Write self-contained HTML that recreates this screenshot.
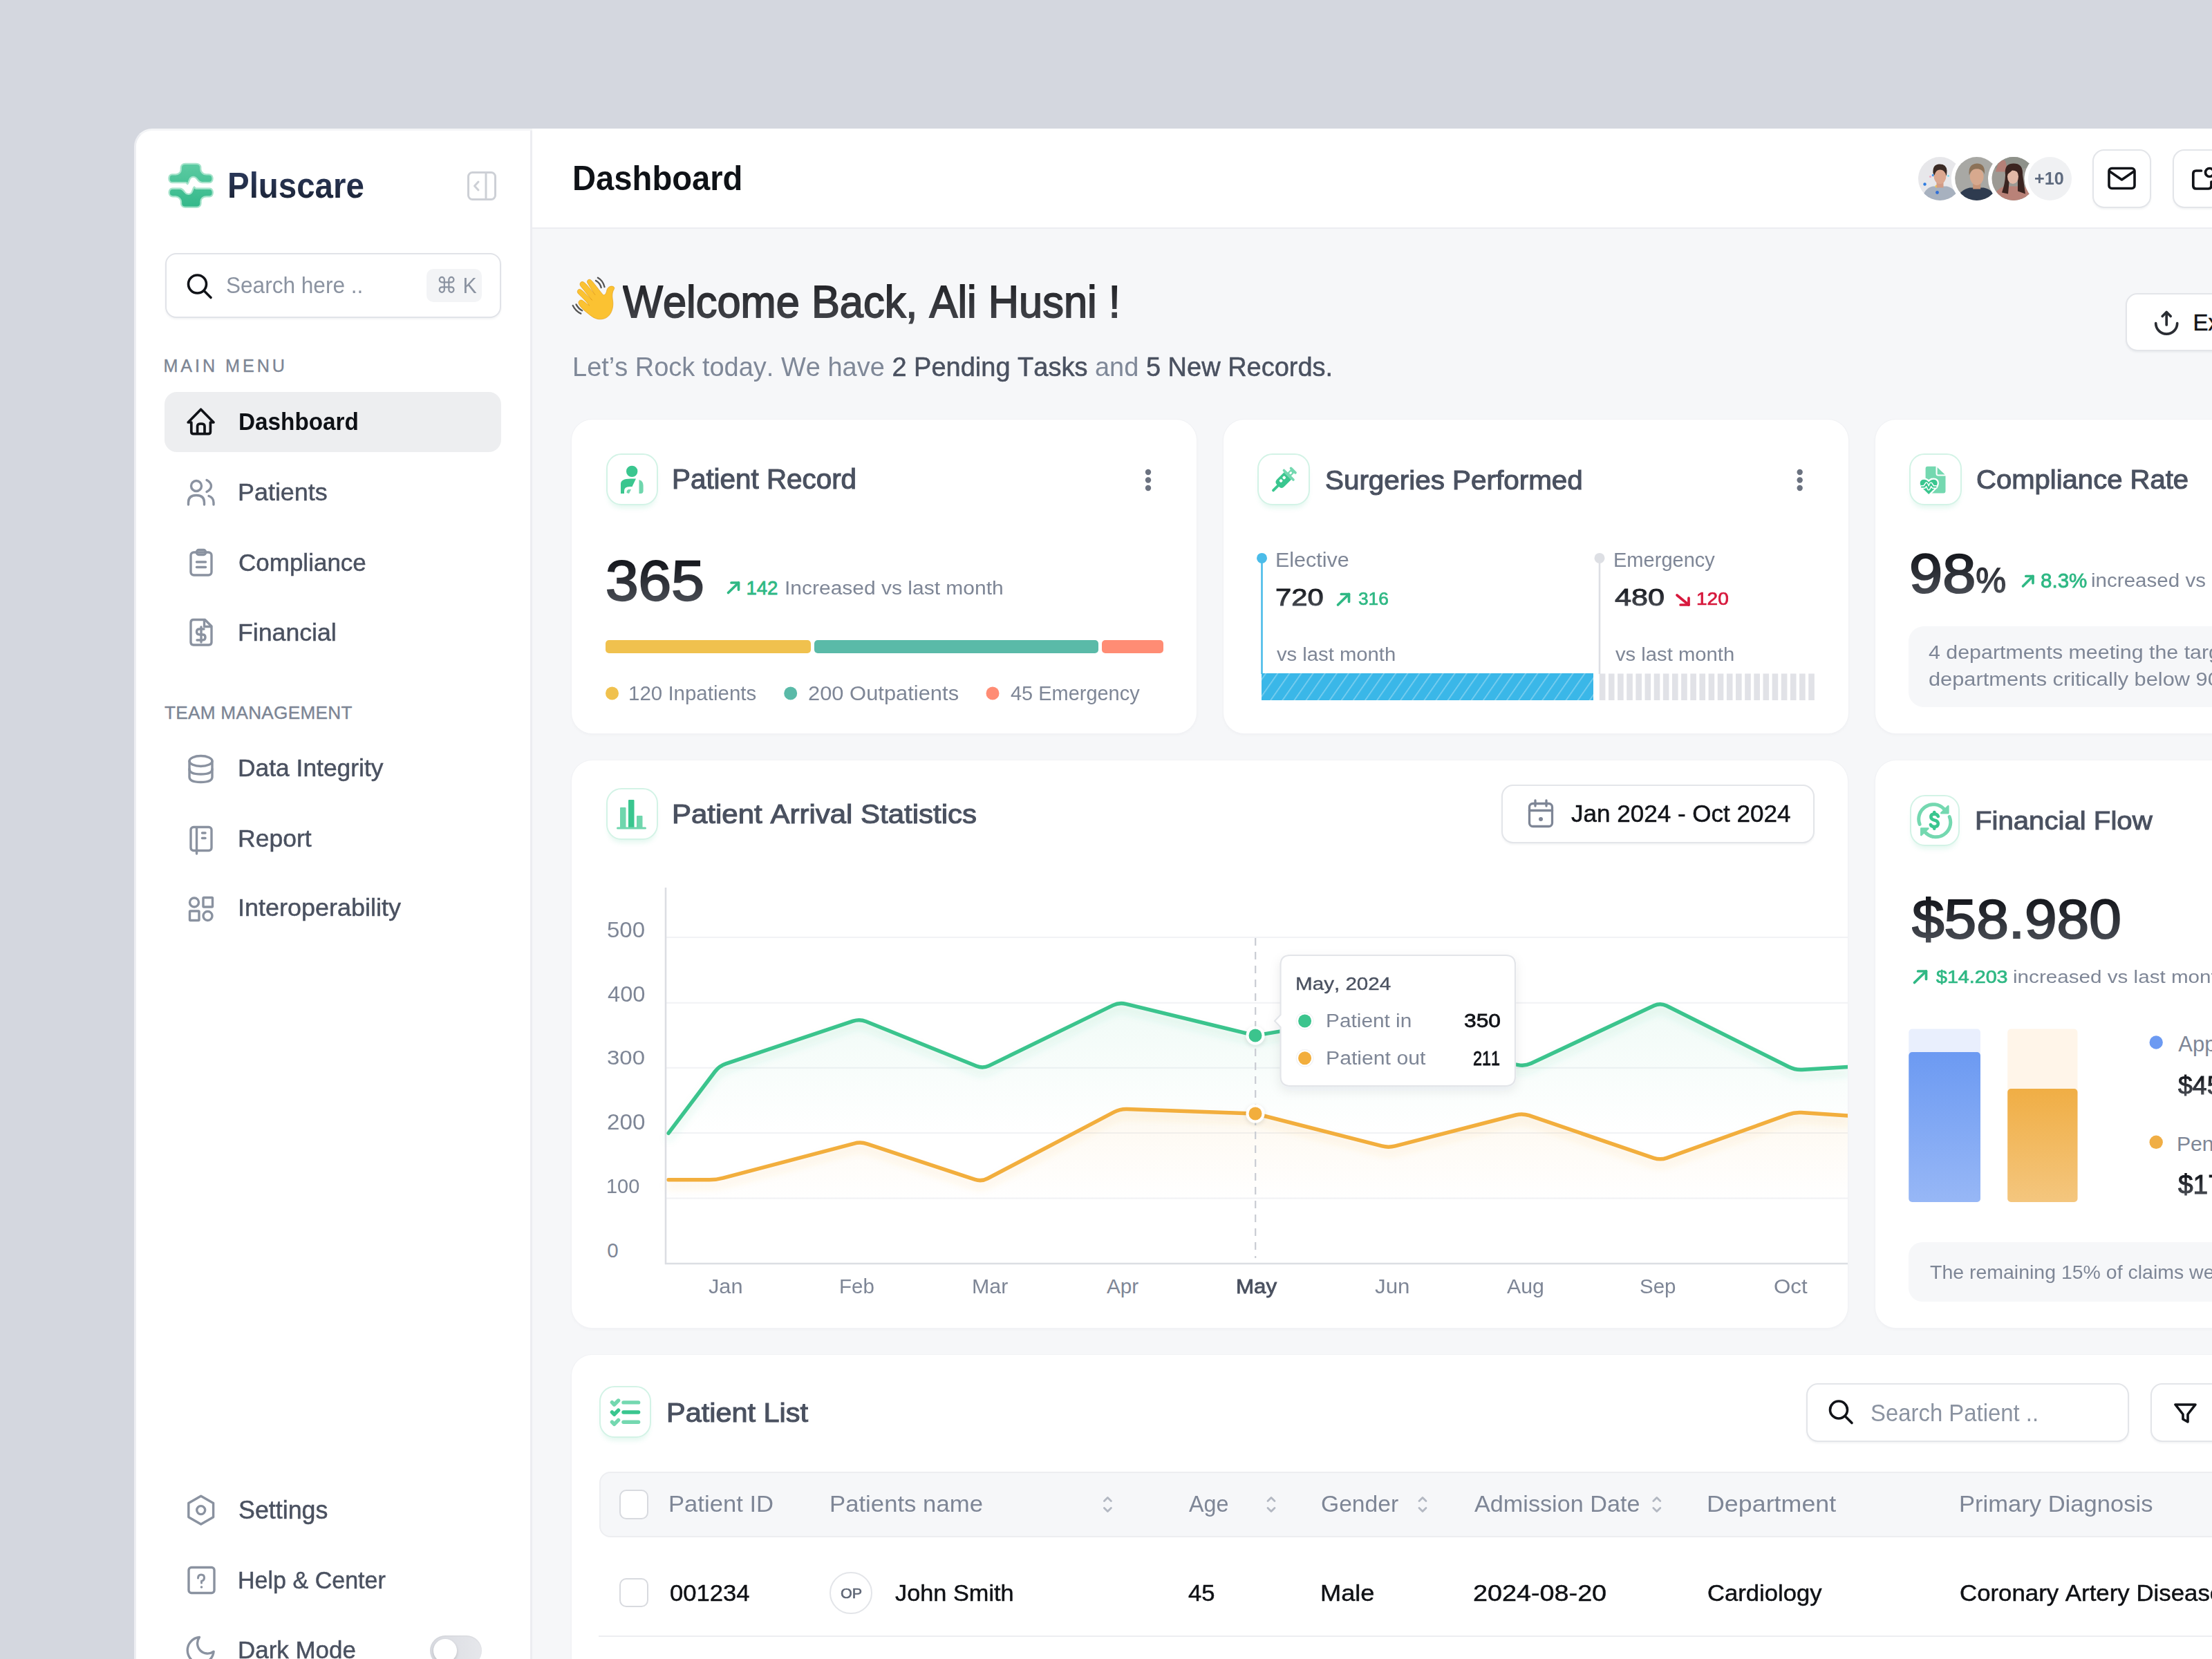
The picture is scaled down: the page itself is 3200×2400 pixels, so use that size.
<!DOCTYPE html>
<html><head><meta charset="utf-8"><title>Pluscare Dashboard</title>
<style>
html,body{margin:0;padding:0;}
body{width:3200px;height:2400px;overflow:hidden;position:relative;background:#D4D7DF;font-family:"Liberation Sans",sans-serif;font-kerning:none;}
.b{position:absolute;box-sizing:border-box;}
.t{position:absolute;white-space:nowrap;font-kerning:none;}
svg.ov{position:absolute;left:0;top:0;}
</style></head><body>
<div class="b" style="left:194.0px;top:186.0px;width:3100.0px;height:2300.0px;background:#F6F7F9;border:3px solid #EDEEF2;border-top-color:#F4F5F7;border-radius:26px;"></div>
<div class="b" style="left:197.0px;top:189.0px;width:570.0px;height:2300.0px;background:#FFFFFF;border-top-left-radius:23px;"></div>
<div class="b" style="left:769.5px;top:186.0px;width:2500.0px;height:3.0px;background:#FFFFFF;"></div>
<div class="b" style="left:767.0px;top:189.0px;width:2.5px;height:2300.0px;background:#ECEDF1;"></div>
<div class="b" style="left:769.5px;top:186.0px;width:2500.0px;height:143.0px;background:#FFFFFF;"></div>
<div class="b" style="left:769.5px;top:329.0px;width:2500.0px;height:2.2px;background:#ECEDF1;"></div>
<div class="b" style="left:238.5px;top:366.0px;width:486.0px;height:94.0px;background:#fff;border:2.5px solid #E1E3E8;border-radius:16px;box-shadow:0 2px 3px rgba(20,30,50,0.05);"></div>
<div class="b" style="left:617.0px;top:389.0px;width:80.0px;height:48.0px;background:#F3F4F6;border-radius:10px;"></div>
<div class="b" style="left:238.0px;top:567.0px;width:487.0px;height:87.0px;background:#EDEEF0;border-radius:18px;"></div>
<div class="b" style="left:622.2px;top:2366.2px;width:75.0px;height:44.0px;background:linear-gradient(90deg,#D9DBE1,#E6E7EB);border-radius:22px;box-shadow:inset 0 1px 2px rgba(0,0,0,0.06);"></div>
<div class="b" style="left:626.7px;top:2371.0px;width:34.0px;height:34.0px;background:#fff;border-radius:50%;box-shadow:0 2px 4px rgba(0,0,0,0.15);"></div>
<div class="b" style="left:3027.0px;top:216.0px;width:85.0px;height:85.0px;background:#fff;border:2.5px solid #E3E5E9;border-radius:17px;box-shadow:0 2px 3px rgba(20,30,50,0.05);"></div>
<div class="b" style="left:3143.0px;top:216.0px;width:120.0px;height:85.0px;background:#fff;border:2.5px solid #E3E5E9;border-radius:17px;box-shadow:0 2px 3px rgba(20,30,50,0.05);"></div>
<div class="b" style="left:3075.0px;top:424.0px;width:200.0px;height:84.0px;background:#fff;border:2.5px solid #E3E5E9;border-radius:17px;box-shadow:0 2px 3px rgba(20,30,50,0.05);"></div>
<div class="b" style="left:827.0px;top:607.0px;width:904.0px;height:454.0px;background:#fff;border-radius:30px;box-shadow:0 0 0 1px #F1F2F5, 0 2px 5px rgba(20,30,50,0.035);"></div>
<div class="b" style="left:1770.0px;top:607.0px;width:904.0px;height:454.0px;background:#fff;border-radius:30px;box-shadow:0 0 0 1px #F1F2F5, 0 2px 5px rgba(20,30,50,0.035);"></div>
<div class="b" style="left:2713.0px;top:607.0px;width:700.0px;height:454.0px;background:#fff;border-radius:30px;box-shadow:0 0 0 1px #F1F2F5, 0 2px 5px rgba(20,30,50,0.035);"></div>
<div class="b" style="left:876.5px;top:656.0px;width:75.5px;height:75.0px;background:#fff;border:2.3px solid #D3F3E6;border-radius:22px;box-shadow:0 7px 7px -3px rgba(60,196,142,0.14);"></div>
<div class="b" style="left:876.0px;top:925.5px;width:297.0px;height:19.0px;background:#F0C14E;border-radius:5px;"></div>
<div class="b" style="left:1178.0px;top:925.5px;width:411.0px;height:19.0px;background:#5ABAA8;border-radius:5px;"></div>
<div class="b" style="left:1594.0px;top:925.5px;width:89.0px;height:19.0px;background:#FF8C74;border-radius:5px;"></div>
<div class="b" style="left:1819.4px;top:656.0px;width:75.5px;height:75.0px;background:#fff;border:2.3px solid #D3F3E6;border-radius:22px;box-shadow:0 7px 7px -3px rgba(60,196,142,0.14);"></div>
<div class="b" style="left:2762.3px;top:656.0px;width:75.5px;height:75.0px;background:#fff;border:2.3px solid #D3F3E6;border-radius:22px;box-shadow:0 7px 7px -3px rgba(60,196,142,0.14);"></div>
<div class="b" style="left:2761.0px;top:906.0px;width:600.0px;height:116.6px;background:#F6F7F9;border-radius:22px;"></div>
<div class="b" style="left:827.0px;top:1100.2px;width:1846.0px;height:821.3px;background:#fff;border-radius:30px;box-shadow:0 0 0 1px #F1F2F5, 0 2px 5px rgba(20,30,50,0.035);"></div>
<div class="b" style="left:876.5px;top:1139.5px;width:75.5px;height:75.0px;background:#fff;border:2.3px solid #D3F3E6;border-radius:22px;box-shadow:0 7px 7px -3px rgba(60,196,142,0.14);"></div>
<div class="b" style="left:2172.0px;top:1135.2px;width:453.3px;height:85.2px;background:#fff;border:2.5px solid #E3E5E9;border-radius:17px;box-shadow:0 2px 3px rgba(20,30,50,0.05);"></div>
<div class="b" style="left:2713.0px;top:1100.2px;width:700.0px;height:821.3px;background:#fff;border-radius:30px;box-shadow:0 0 0 1px #F1F2F5, 0 2px 5px rgba(20,30,50,0.035);"></div>
<div class="b" style="left:2762.8px;top:1149.5px;width:72.5px;height:74.6px;background:#fff;border:2.3px solid #D3F3E6;border-radius:22px;box-shadow:0 7px 7px -3px rgba(60,196,142,0.14);"></div>
<div class="b" style="left:2761.2px;top:1796.7px;width:600.0px;height:86.3px;background:#F6F7F9;border-radius:20px;"></div>
<div class="b" style="left:827.0px;top:1960.0px;width:2500.0px;height:600.0px;background:#fff;border-radius:30px;box-shadow:0 0 0 1px #F1F2F5, 0 2px 5px rgba(20,30,50,0.035);"></div>
<div class="b" style="left:866.9px;top:2004.6px;width:75.5px;height:75.5px;background:#fff;border:2.3px solid #D3F3E6;border-radius:22px;box-shadow:0 7px 7px -3px rgba(60,196,142,0.14);"></div>
<div class="b" style="left:2613.3px;top:2000.8px;width:466.4px;height:84.8px;background:#fff;border:2.5px solid #E3E5E9;border-radius:17px;box-shadow:0 2px 3px rgba(20,30,50,0.05);"></div>
<div class="b" style="left:3111.4px;top:2000.8px;width:120.0px;height:84.8px;background:#fff;border:2.5px solid #E3E5E9;border-radius:17px;box-shadow:0 2px 3px rgba(20,30,50,0.05);"></div>
<div class="b" style="left:866.5px;top:2128.5px;width:2400.0px;height:95.5px;background:#F6F7F9;border:2px solid #EDEEF1;border-radius:16px;"></div>
<div class="b" style="left:895.8px;top:2154.7px;width:42.1px;height:43.0px;background:#fff;border:2.5px solid #D8DADF;border-radius:10px;"></div>
<div class="b" style="left:895.8px;top:2282.7px;width:42.1px;height:42.5px;background:#fff;border:2.5px solid #D8DADF;border-radius:10px;"></div>
<div class="b" style="left:1200.0px;top:2273.6px;width:61.5px;height:61.5px;background:#fff;border:2.5px solid #E3E5E9;border-radius:50%;"></div>
<div class="b" style="left:866.0px;top:2366.0px;width:2400.0px;height:2.2px;background:#EDEEF1;"></div>
<svg class="ov" width="3200" height="2400" viewBox="0 0 3200 2400">
<defs>
<linearGradient id="lg" gradientUnits="userSpaceOnUse" x1="0" y1="220" x2="0" y2="1390"><stop offset="0" stop-color="#5CCBA2"/><stop offset="1" stop-color="#33B88A"/></linearGradient>
<linearGradient id="gfill" x1="0" y1="0" x2="0" y2="1"><stop offset="0" stop-color="#3CC48E" stop-opacity="0.075"/><stop offset="0.5" stop-color="#3CC48E" stop-opacity="0.0"/></linearGradient>
<linearGradient id="ofill" x1="0" y1="0" x2="0" y2="1"><stop offset="0" stop-color="#F2AE3D" stop-opacity="0.075"/><stop offset="0.6" stop-color="#F2AE3D" stop-opacity="0.0"/></linearGradient>
<linearGradient id="bluebar" x1="0" y1="0" x2="0" y2="1"><stop offset="0" stop-color="#6C9AF2"/><stop offset="1" stop-color="#97B7F6"/></linearGradient>
<linearGradient id="orabar" x1="0" y1="0" x2="0" y2="1"><stop offset="0" stop-color="#F0AE45"/><stop offset="1" stop-color="#F4C67E"/></linearGradient>
<linearGradient id="numgrad" x1="0" y1="0" x2="0" y2="1"><stop offset="0" stop-color="#0B0D12"/><stop offset="1" stop-color="#4E525B"/></linearGradient>
<pattern id="hatch" width="14" height="14" patternUnits="userSpaceOnUse" patternTransform="rotate(35)"><rect width="14" height="14" fill="#3AB7E8"/><rect width="1.6" height="14" fill="#7FD0F0"/></pattern>
<filter id="sh" x="-20%" y="-20%" width="140%" height="160%"><feDropShadow dx="0" dy="6" stdDeviation="8" flood-color="#1F2937" flood-opacity="0.08"/></filter>
<filter id="dsh" x="-60%" y="-60%" width="220%" height="220%"><feDropShadow dx="0" dy="2" stdDeviation="3" flood-color="#1F2937" flood-opacity="0.12"/></filter>
<filter id="lsh" x="-5%" y="-30%" width="110%" height="160%"><feDropShadow dx="0" dy="8" stdDeviation="6" flood-color="#3CC48E" flood-opacity="0.18"/></filter>
<filter id="losh" x="-5%" y="-30%" width="110%" height="160%"><feDropShadow dx="0" dy="8" stdDeviation="6" flood-color="#F2AE3D" flood-opacity="0.18"/></filter>
</defs>
<svg x="230" y="225" width="100" height="90" viewBox="0 0 1843 1659">
<g fill="url(#lg)" stroke="#A6E3CB" stroke-width="42" stroke-linejoin="round">
<path d="M350,720 L720,720 L760,760 C800,720 800,640 840,600 C880,560 960,550 1010,620 C1050,680 1080,720 1150,720 L1340,720 C1400,720 1430,670 1430,612 C1430,550 1390,505 1330,505 L1260,505 C1180,505 1110,440 1110,360 L1110,320 C1110,260 1060,220 990,220 L700,220 C630,220 585,265 585,330 L585,380 C585,450 520,505 440,505 L350,505 C300,505 265,550 265,612 C265,670 300,720 350,720 Z"/>
<path d="M1350,880 L980,880 L940,840 C900,880 900,960 860,1000 C820,1040 740,1050 690,980 C650,920 620,880 550,880 L360,880 C300,880 270,930 270,988 C270,1050 310,1095 370,1095 L440,1095 C520,1095 590,1160 590,1240 L590,1280 C590,1340 640,1380 710,1380 L1000,1380 C1070,1380 1115,1335 1115,1270 L1115,1220 C1115,1150 1180,1095 1260,1095 L1350,1095 C1400,1095 1435,1050 1435,988 C1435,930 1400,880 1350,880 Z"/>
</g></svg>
<rect x="677.5" y="249.5" width="39" height="39" rx="6" fill="none" stroke="#CDD0D6" stroke-width="3"/>
<line x1="703" y1="249.5" x2="703" y2="288.5" stroke="#CDD0D6" stroke-width="3"/>
<polyline points="692,263 686.5,269 692,275" fill="none" stroke="#CDD0D6" stroke-width="3" stroke-linecap="round" stroke-linejoin="round"/>
<circle cx="285.5" cy="411" r="13" fill="none" stroke="#111318" stroke-width="3.6"/>
<line x1="295" y1="420.5" x2="305" y2="430.5" stroke="#111318" stroke-width="3.6" stroke-linecap="round"/>
<path d="M276.8,611 L272.2,611 L290.6,592.2 L309,611 L304.4,611 L304.4,624.5 Q304.4,627.6 301.3,627.6 L279.9,627.6 Q276.8,627.6 276.8,624.5 Z" fill="none" stroke="#111318" stroke-width="3.7" stroke-linejoin="round"/>
<path d="M285.6,627.6 L285.6,616.5 Q285.6,613 290.8,613 Q296,613 296,616.5 L296,627.6" fill="none" stroke="#111318" stroke-width="3.7" stroke-linejoin="round"/>
<g fill="none" stroke="#8A92A0" stroke-width="3.4" stroke-linecap="round" stroke-linejoin="round"><circle cx="284" cy="703" r="7.5"/><path d="M272.5,730 L272.5,727 Q272.5,716.5 284,716.5 Q295.5,716.5 295.5,727 L295.5,730"/>
<path d="M299,694.5 Q305.5,698 305.5,703 Q305.5,708 299,711.5"/><path d="M302,717.5 Q309,720 309,727 L309,730"/></g>
<g fill="none" stroke="#8A92A0" stroke-width="3.4" stroke-linecap="round" stroke-linejoin="round"><rect x="276" y="799" width="30" height="33" rx="4.5"/><rect x="284.5" y="795.5" width="13" height="7" rx="3"/>
<line x1="284.5" y1="813" x2="297.5" y2="813"/><line x1="284.5" y1="820.5" x2="297.5" y2="820.5"/></g>
<g fill="none" stroke="#8A92A0" stroke-width="3.4" stroke-linecap="round" stroke-linejoin="round"><path d="M280,896.5 L296.5,896.5 L306,906 L306,929 Q306,933 302,933 L280,933 Q276,933 276,929 L276,900.5 Q276,896.5 280,896.5 Z"/>
<path d="M295.5,897 L295.5,906.5 L305.5,906.5"/>
<path d="M295,910 L288.5,910 Q284.5,910 284.5,914 Q284.5,918 288.5,918 L293,918 Q297,918 297,922 Q297,926 293,926 L285,926"/><line x1="291" y1="907" x2="291" y2="929"/></g>
<g fill="none" stroke="#8A92A0" stroke-width="3.4" stroke-linecap="round" stroke-linejoin="round"><ellipse cx="290.5" cy="1101" rx="16.5" ry="7.5"/><path d="M274,1101 L274,1124 Q274,1131.5 290.5,1131.5 Q307,1131.5 307,1124 L307,1101"/>
<path d="M274,1112.5 Q274,1120 290.5,1120 Q307,1120 307,1112.5"/></g>
<g fill="none" stroke="#8A92A0" stroke-width="3.4" stroke-linecap="round" stroke-linejoin="round"><rect x="276" y="1196.5" width="30" height="34" rx="4"/><line x1="284.5" y1="1197" x2="284.5" y2="1235"/>
<line x1="292.5" y1="1205" x2="297" y2="1205"/><line x1="292.5" y1="1212.5" x2="297" y2="1212.5"/></g>
<g fill="none" stroke="#8A92A0" stroke-width="3.4" stroke-linecap="round" stroke-linejoin="round"><circle cx="281" cy="1305.5" r="6.5"/><rect x="294" y="1298.5" width="13.5" height="13.5" rx="1"/>
<rect x="274.5" y="1318" width="13.5" height="13.5" rx="1"/><circle cx="300.5" cy="1325" r="6.5"/></g>
<g fill="none" stroke="#8A92A0" stroke-width="3.4" stroke-linecap="round" stroke-linejoin="round"><path d="M290.7,2164.3 L308.6,2174.5 L308.6,2194.8 L290.7,2205 L272.8,2194.8 L272.8,2174.5 Z"/><circle cx="290.7" cy="2184.6" r="6"/></g>
<g fill="none" stroke="#8A92A0" stroke-width="3.4" stroke-linecap="round" stroke-linejoin="round"><rect x="273" y="2267.5" width="37" height="37" rx="4"/></g>
<path d="M286.5,2283 Q286.5,2278 291,2278 Q295.5,2278 295.5,2282.5 Q295.5,2286 291.5,2287.5 L291.5,2290" fill="none" stroke="#8A92A0" stroke-width="3" stroke-linecap="round"/>
<circle cx="291.5" cy="2296" r="1.8" fill="#8A92A0"/>
<g transform="translate(264.8,2362.2) scale(2.11)"><path d="M21 12.79A9 9 0 1 1 11.21 3 7 7 0 0 0 21 12.79z" fill="none" stroke="#8A92A0" stroke-width="1.6" stroke-linejoin="round"/></g>
<circle cx="2806.5" cy="258.5" r="37.0" fill="#fff"/>
<clipPath id="av2806"><circle cx="2806.5" cy="258.5" r="31.5"/></clipPath><g clip-path="url(#av2806)"><rect x="2771.5" y="223.5" width="70" height="70" fill="#E7E7EA"/><g transform="translate(2806.5,258.5)">
<circle cx="-22" cy="8" r="2.2" fill="#2F7DE1"/><circle cx="-14" cy="-3" r="1.6" fill="#F0A7C0"/><circle cx="-10" cy="-5" r="1.8" fill="#3E90E8"/><circle cx="12" cy="-4" r="1.4" fill="#7FD3E8"/>
<path d="M-26,32 Q-24,14 -10,11 L10,11 Q24,14 26,32 Z" fill="#A7B1BF"/>
<circle cx="-4" cy="20" r="2.4" fill="#2F6FD8"/><circle cx="-5" cy="11" r="2" fill="#F2C94C"/>
<rect x="-5" y="4" width="10" height="9" fill="#D29C86"/>
<ellipse cx="0" cy="-4" rx="9" ry="11.5" fill="#DCA890"/>
<path d="M-10,-8 Q-11,-20 -2,-21 Q9,-22 10,-12 Q10,-6 9,-4 Q7,-13 0,-13 Q-6,-13 -8,-5 Z" fill="#3A2A24"/></g></g>
<circle cx="2859.7" cy="258.5" r="37.0" fill="#fff"/>
<clipPath id="av2859"><circle cx="2859.7" cy="258.5" r="31.5"/></clipPath><g clip-path="url(#av2859)"><rect x="2824.7" y="223.5" width="70" height="70" fill="#A8A8A4"/><g transform="translate(2859.7,258.5)">
<path d="M-30,34 Q-26,16 -10,13 L10,13 Q26,16 30,34 Z" fill="#2E3B4F"/>
<rect x="-5.5" y="5" width="11" height="10" fill="#C89578"/>
<ellipse cx="0" cy="-3" rx="10" ry="12.5" fill="#D7A98E"/>
<path d="M-11,-5 Q-13,-21 0,-22 Q13,-22 11,-6 Q10,-12 3,-14 Q-6,-15 -9,-9 Z" fill="#8C7258"/></g></g>
<circle cx="2913.0" cy="258.5" r="37.0" fill="#fff"/>
<clipPath id="av2913"><circle cx="2913.0" cy="258.5" r="31.5"/></clipPath><g clip-path="url(#av2913)"><rect x="2878.0" y="223.5" width="70" height="70" fill="#9C9A94"/><g transform="translate(2913.0,258.5)">
<rect x="-35" y="-35" width="70" height="20" fill="#8E918A"/>
<path d="M-30,34 Q-28,14 -12,11 L12,11 Q28,14 30,34 Z" fill="#B98278"/>
<path d="M-26,-10 Q-22,-30 -12,-26 L-8,-10 Z" fill="#B58077"/>
<path d="M-12,-6 Q-14,-22 0,-22 Q14,-22 13,-6 Q15,8 17,22 L6,18 L6,0 L-6,0 L-8,22 L-17,20 Q-12,6 -12,-6 Z" fill="#3B2420"/>
<ellipse cx="-1" cy="-3" rx="8" ry="10.5" fill="#E2B8A6"/>
<path d="M-9,-6 Q-8,-17 2,-17 Q11,-16 10,-4 Q6,-12 -2,-12 Z" fill="#3B2420"/></g></g>
<circle cx="2965.5" cy="258.5" r="37" fill="#fff"/><circle cx="2965.5" cy="258.5" r="31.5" fill="#F0F1F3"/>
<rect x="3051" y="243.5" width="37" height="29" rx="4" fill="none" stroke="#111318" stroke-width="3.6"/>
<polyline points="3052,248 3069.5,260 3087,248" fill="none" stroke="#111318" stroke-width="3.6" stroke-linejoin="round" stroke-linecap="round"/>
<path d="M3184.5,247 L3177,247 Q3172.8,247 3172.8,251.2 L3172.8,268.8 Q3172.8,273 3177,273 L3194.8,273 Q3199,273 3199,268.8 L3199,263" fill="none" stroke="#111318" stroke-width="3.7" stroke-linecap="round"/>
<circle cx="3196.5" cy="249.5" r="6" fill="none" stroke="#111318" stroke-width="3.7"/>
<svg x="820" y="390" width="80" height="80" viewBox="0 0 1659 1659">
<g fill="none" stroke="#555" stroke-width="48" stroke-linecap="round">
<path d="M870,330 C960,380 1010,450 1030,540"/><path d="M930,245 C1030,300 1100,390 1130,520"/>
<path d="M180,1080 C230,1180 310,1270 420,1320"/><path d="M280,1045 C320,1120 380,1190 460,1230"/>
</g>
<path fill="#FBC232" stroke="#E39B12" stroke-width="14" d="M1000,1490 C860,1490 760,1420 640,1320 C520,1230 400,1120 360,1030 C330,960 390,890 460,920 C520,950 600,1040 680,1080 C600,980 460,830 350,730 C290,670 320,580 390,590 C450,600 560,720 760,920 C650,790 500,600 410,490 C370,430 410,350 480,365 C540,380 640,500 850,760 C770,640 660,470 620,400 C590,340 640,280 700,300 C760,320 880,510 1090,760 C1150,770 1180,720 1200,620 C1220,540 1290,490 1360,500 C1430,510 1440,560 1410,600 C1350,700 1360,820 1380,940 C1410,1160 1320,1490 1000,1490 Z"/>
</svg>
<path d="M3118.7,467.7 A15.5,15.5 0 0 0 3149.7,467.7" fill="none" stroke="#2A2D33" stroke-width="3.7" stroke-linecap="round"/>
<line x1="3134.2" y1="452" x2="3134.2" y2="470" stroke="#2A2D33" stroke-width="3.7" stroke-linecap="round"/>
<polyline points="3128.2,457.5 3134.2,451.5 3140.2,457.5" fill="none" stroke="#2A2D33" stroke-width="3.7" stroke-linecap="round" stroke-linejoin="round"/>
<circle cx="914.2" cy="681.9" r="8.2" fill="#3AC68F"/>
<path d="M898,714 L898,700 Q898,692.4 912,692.4 L920,692.4 L914.5,704 L911,704 Q903,704 903,710 L903,714 Z" fill="#3AC68F"/>
<path d="M906.5,713 Q906.5,708.5 909.5,708 L913,708 L910,714 Z" fill="#6FD6AD"/>
<path d="M924.5,694 Q930.6,696 930.6,702 L930.6,710 Q930.6,714 927,714 L924.5,714 Z" fill="#6FD6AD"/>
<g fill="#6B7280"><circle cx="1661.0" cy="683.0" r="4.2"/><circle cx="1661.0" cy="694.5" r="4.2"/><circle cx="1661.0" cy="706.0" r="4.2"/></g>
<g fill="none" stroke="#2FB884" stroke-width="3.7" stroke-linecap="round" stroke-linejoin="round"><line x1="1053.5" y1="857.5" x2="1068.5" y2="843.0"/><polyline points="1058.0,843.0 1068.5,843.0 1068.5,853.1"/></g>
<circle cx="885.5" cy="1003" r="9.5" fill="#F0C14E"/><circle cx="1143.7" cy="1003" r="9.5" fill="#5ABAA8"/><circle cx="1436" cy="1003" r="9.5" fill="#FF8C74"/>
<g transform="translate(1858.2,693.2) rotate(45)">
<rect x="-1.9" y="11" width="3.8" height="13.8" rx="1.9" fill="#3AC68F"/>
<path d="M-7.4,-6.6 L7.4,-6.6 L7.4,8 Q7.4,13.4 2,13.4 L-2,13.4 Q-7.4,13.4 -7.4,8 Z" fill="#3AC68F"/>
<rect x="-7.4" y="-8.6" width="14.8" height="2.4" fill="#74D8B0"/>
<rect x="-11.4" y="-10.3" width="22.8" height="3.6" rx="1.8" fill="#74D8B0"/>
<rect x="-3.6" y="-17.5" width="7.2" height="8" fill="#74D8B0"/>
<rect x="-6.4" y="-19.6" width="12.8" height="3.6" rx="1.8" fill="#74D8B0"/>
<rect x="-1.4" y="-14.6" width="2.8" height="3.8" rx="1" fill="#fff"/>
<rect x="-4" y="3.2" width="4.2" height="4.2" rx="1.4" fill="#fff"/><rect x="-4" y="-3.3" width="4.2" height="4.2" rx="1.4" fill="#fff"/>
</g>
<g fill="#6B7280"><circle cx="2603.7" cy="683.0" r="4.2"/><circle cx="2603.7" cy="694.5" r="4.2"/><circle cx="2603.7" cy="706.0" r="4.2"/></g>
<circle cx="1825.5" cy="807.4" r="7.5" fill="#4BBCE9"/><line x1="1825.5" y1="807" x2="1825.5" y2="975" stroke="#4BBCE9" stroke-width="2.6"/>
<circle cx="2314" cy="807.4" r="7.5" fill="#DDDFE4"/><line x1="2314" y1="807" x2="2314" y2="975" stroke="#DDDFE4" stroke-width="2.6"/>
<g fill="none" stroke="#2FB884" stroke-width="3.7" stroke-linecap="round" stroke-linejoin="round"><line x1="1935.5" y1="875.0" x2="1951.5" y2="859.5"/><polyline points="1940.3,859.5 1951.5,859.5 1951.5,870.4"/></g>
<g fill="none" stroke="#D7193D" stroke-width="3.7" stroke-linecap="round" stroke-linejoin="round"><line x1="2426.0" y1="861.0" x2="2443.0" y2="875.0"/><polyline points="2443.0,865.2 2443.0,875.0 2431.1,875.0"/></g>
<rect x="1825" y="974" width="480" height="39" fill="url(#hatch)"/>
<rect x="2313.80" y="974.5" width="8.6" height="38.5" fill="#E1E2E7"/><rect x="2326.95" y="974.5" width="8.6" height="38.5" fill="#E1E2E7"/><rect x="2340.10" y="974.5" width="8.6" height="38.5" fill="#E1E2E7"/><rect x="2353.25" y="974.5" width="8.6" height="38.5" fill="#E1E2E7"/><rect x="2366.40" y="974.5" width="8.6" height="38.5" fill="#E1E2E7"/><rect x="2379.55" y="974.5" width="8.6" height="38.5" fill="#E1E2E7"/><rect x="2392.70" y="974.5" width="8.6" height="38.5" fill="#E1E2E7"/><rect x="2405.85" y="974.5" width="8.6" height="38.5" fill="#E1E2E7"/><rect x="2419.00" y="974.5" width="8.6" height="38.5" fill="#E1E2E7"/><rect x="2432.15" y="974.5" width="8.6" height="38.5" fill="#E1E2E7"/><rect x="2445.30" y="974.5" width="8.6" height="38.5" fill="#E1E2E7"/><rect x="2458.45" y="974.5" width="8.6" height="38.5" fill="#E1E2E7"/><rect x="2471.60" y="974.5" width="8.6" height="38.5" fill="#E1E2E7"/><rect x="2484.75" y="974.5" width="8.6" height="38.5" fill="#E1E2E7"/><rect x="2497.90" y="974.5" width="8.6" height="38.5" fill="#E1E2E7"/><rect x="2511.05" y="974.5" width="8.6" height="38.5" fill="#E1E2E7"/><rect x="2524.20" y="974.5" width="8.6" height="38.5" fill="#E1E2E7"/><rect x="2537.35" y="974.5" width="8.6" height="38.5" fill="#E1E2E7"/><rect x="2550.50" y="974.5" width="8.6" height="38.5" fill="#E1E2E7"/><rect x="2563.65" y="974.5" width="8.6" height="38.5" fill="#E1E2E7"/><rect x="2576.80" y="974.5" width="8.6" height="38.5" fill="#E1E2E7"/><rect x="2589.95" y="974.5" width="8.6" height="38.5" fill="#E1E2E7"/><rect x="2603.10" y="974.5" width="8.6" height="38.5" fill="#E1E2E7"/><rect x="2616.25" y="974.5" width="8.6" height="38.5" fill="#E1E2E7"/>
<path d="M2788.5,674.8 L2800.5,674.8 L2800.5,685 Q2800.5,688.5 2804,688.5 L2814.5,688.5 L2814.5,710.5 Q2814.5,713.4 2811.6,713.4 L2788.5,713.4 Q2785.6,713.4 2785.6,710.5 L2785.6,677.7 Q2785.6,674.8 2788.5,674.8 Z" fill="#74D8B0"/>
<path d="M2802.6,676 L2813.6,686.6 L2803.8,686.6 Q2802.6,686.6 2802.6,685.4 Z" fill="#74D8B0"/>
<path d="M2790.2,716.6 L2780.5,707 Q2776.6,703 2776.6,699.2 Q2776.6,692.6 2783.4,692.6 Q2788,692.6 2790.2,696 Q2792.4,692.6 2797,692.6 Q2803.8,692.6 2803.8,699.2 Q2803.8,703 2799.9,707 Z" fill="#3AC68F" stroke="#fff" stroke-width="2.2" stroke-linejoin="round"/>
<polyline points="2780,704.5 2784,704.5 2787,700 2790.2,707 2793.4,700 2796.4,704.5 2800.5,704.5" fill="none" stroke="#fff" stroke-width="5" stroke-linejoin="round" stroke-linecap="round"/>
<polyline points="2780,704.5 2784,704.5 2787,700 2790.2,707 2793.4,700 2796.4,704.5 2800.5,704.5" fill="none" stroke="#3AC68F" stroke-width="2.2" stroke-linejoin="round" stroke-linecap="round"/>
<g fill="none" stroke="#2FB884" stroke-width="3.7" stroke-linecap="round" stroke-linejoin="round"><line x1="2926.5" y1="848.0" x2="2941.0" y2="833.5"/><polyline points="2930.8,833.5 2941.0,833.5 2941.0,843.6"/></g>
<rect x="897" y="1168" width="8.5" height="30" rx="1" fill="#6FD6AD"/>
<rect x="909" y="1157" width="8.5" height="41" rx="1" fill="#3AC68F"/>
<rect x="921" y="1180" width="8.5" height="18" rx="1" fill="#6FD6AD"/>
<rect x="892" y="1196.5" width="43" height="3" rx="1.5" fill="#6FD6AD"/>
<g fill="none" stroke="#7E8696" stroke-width="3.3" stroke-linecap="round"><rect x="2212.5" y="1162.5" width="33" height="33" rx="5"/>
<line x1="2212.5" y1="1172.5" x2="2245.5" y2="1172.5"/><line x1="2221" y1="1158" x2="2221" y2="1166"/><line x1="2237" y1="1158" x2="2237" y2="1166"/></g>
<circle cx="2229" cy="1185" r="3" fill="#7E8696"/>
<line x1="963" y1="1356.0" x2="2673" y2="1356.0" stroke="#F1F2F5" stroke-width="2"/><line x1="963" y1="1450.7" x2="2673" y2="1450.7" stroke="#F1F2F5" stroke-width="2"/><line x1="963" y1="1544.8" x2="2673" y2="1544.8" stroke="#F1F2F5" stroke-width="2"/><line x1="963" y1="1639.0" x2="2673" y2="1639.0" stroke="#F1F2F5" stroke-width="2"/><line x1="963" y1="1733.6" x2="2673" y2="1733.6" stroke="#F1F2F5" stroke-width="2"/>
<path d="M967.0,1639.4 L1034.5,1550.0 Q1040.5,1542.0 1050.0,1538.8 L1234.1,1477.2 Q1243.6,1474.0 1252.9,1477.7 L1412.7,1542.3 Q1422.0,1546.0 1431.0,1541.6 L1610.0,1454.4 Q1619.0,1450.0 1628.7,1452.4 L1806.3,1495.6 Q1816.0,1498.0 1825.9,1496.4 L1890.1,1485.6 Q1900.0,1484.0 1909.8,1485.9 L2196.2,1540.6 Q2206.0,1542.5 2215.1,1538.3 L2392.9,1454.7 Q2402.0,1450.5 2410.9,1455.0 L2588.1,1543.5 Q2597.0,1548.0 2607.0,1547.4 L2673.0,1543.4 L2673,1828 L967,1828 Z" fill="url(#gfill)"/>
<path d="M967.0,1706.7 L1026.5,1706.7 Q1036.5,1706.7 1046.2,1704.1 L1235.3,1654.3 Q1245.0,1651.7 1254.5,1654.8 L1410.5,1706.4 Q1420.0,1709.5 1428.9,1704.8 L1611.5,1608.9 Q1620.4,1604.2 1630.4,1604.5 L1806.0,1610.7 Q1816.0,1611.0 1825.7,1613.5 L1999.1,1657.9 Q2008.8,1660.4 2018.5,1657.9 L2192.8,1613.0 Q2202.5,1610.5 2212.0,1613.7 L2392.5,1675.3 Q2402.0,1678.5 2411.4,1675.1 L2586.6,1612.4 Q2596.0,1609.0 2606.0,1609.6 L2673.0,1614.0 L2673,1828 L967,1828 Z" fill="url(#ofill)"/>
<clipPath id="chartclip"><rect x="900" y="1100" width="1773" height="760"/></clipPath>
<g clip-path="url(#chartclip)"><path d="M967.0,1639.4 L1034.5,1550.0 Q1040.5,1542.0 1050.0,1538.8 L1234.1,1477.2 Q1243.6,1474.0 1252.9,1477.7 L1412.7,1542.3 Q1422.0,1546.0 1431.0,1541.6 L1610.0,1454.4 Q1619.0,1450.0 1628.7,1452.4 L1806.3,1495.6 Q1816.0,1498.0 1825.9,1496.4 L1890.1,1485.6 Q1900.0,1484.0 1909.8,1485.9 L2196.2,1540.6 Q2206.0,1542.5 2215.1,1538.3 L2392.9,1454.7 Q2402.0,1450.5 2410.9,1455.0 L2588.1,1543.5 Q2597.0,1548.0 2607.0,1547.4 L2673.0,1543.4" fill="none" stroke="#3BC48D" stroke-width="5.5" stroke-linecap="round" stroke-linejoin="round" filter="url(#lsh)"/>
<path d="M967.0,1706.7 L1026.5,1706.7 Q1036.5,1706.7 1046.2,1704.1 L1235.3,1654.3 Q1245.0,1651.7 1254.5,1654.8 L1410.5,1706.4 Q1420.0,1709.5 1428.9,1704.8 L1611.5,1608.9 Q1620.4,1604.2 1630.4,1604.5 L1806.0,1610.7 Q1816.0,1611.0 1825.7,1613.5 L1999.1,1657.9 Q2008.8,1660.4 2018.5,1657.9 L2192.8,1613.0 Q2202.5,1610.5 2212.0,1613.7 L2392.5,1675.3 Q2402.0,1678.5 2411.4,1675.1 L2586.6,1612.4 Q2596.0,1609.0 2606.0,1609.6 L2673.0,1614.0" fill="none" stroke="#F2AE3D" stroke-width="5.5" stroke-linecap="round" stroke-linejoin="round" filter="url(#losh)"/></g>
<line x1="963" y1="1284" x2="963" y2="1829" stroke="#DCDEE3" stroke-width="2.6"/>
<line x1="962" y1="1828" x2="2673" y2="1828" stroke="#DCDEE3" stroke-width="2.6"/>
<line x1="1816.2" y1="1357" x2="1816.2" y2="1820" stroke="#C9CCD3" stroke-width="2.2" stroke-dasharray="11 9"/>
<circle cx="1816" cy="1498" r="13.5" fill="#fff" filter="url(#dsh)"/><circle cx="1816" cy="1498" r="9.5" fill="#3BC48D"/>
<circle cx="1816" cy="1611" r="13.5" fill="#fff" filter="url(#dsh)"/><circle cx="1816" cy="1611" r="9.5" fill="#F2AE3D"/>
<g filter="url(#sh)"><path d="M1866.5,1382 L2178,1382 Q2192,1382 2192,1396 L2192,1557 Q2192,1571 2178,1571 L1866.5,1571 Q1852.5,1571 1852.5,1557 L1852.5,1486 L1844,1477 L1852.5,1468 L1852.5,1396 Q1852.5,1382 1866.5,1382 Z" fill="#fff" stroke="#E3E5E9" stroke-width="2.2"/></g>
<circle cx="1887.6" cy="1477" r="13" fill="#F3F4F6"/><circle cx="1887.6" cy="1477" r="11.5" fill="#fff"/><circle cx="1887.6" cy="1477" r="9.5" fill="#3BC48D"/>
<circle cx="1887.6" cy="1530.7" r="13" fill="#F3F4F6"/><circle cx="1887.6" cy="1530.7" r="11.5" fill="#fff"/><circle cx="1887.6" cy="1530.7" r="9.5" fill="#F2AE3D"/>
<g fill="none" stroke="#74D8B0" stroke-width="5" stroke-linecap="round">
<path d="M2777.1,1192.4 A21.2,21.2 0 0 1 2812,1170"/><path d="M2820.2,1181.6 A21.2,21.2 0 0 1 2785,1204"/></g>
<path d="M2818.4,1166.2 L2818.4,1176.2 L2808.2,1176.2 Z" fill="#74D8B0" stroke="#74D8B0" stroke-width="2.5" stroke-linejoin="round"/>
<path d="M2779.3,1198.5 L2789.4,1198.5 L2779.3,1208.1 Z" fill="#74D8B0" stroke="#74D8B0" stroke-width="2.5" stroke-linejoin="round"/>
<g fill="none" stroke="#3AC68F" stroke-width="4.6" stroke-linecap="round" stroke-linejoin="round">
<line x1="2798.3" y1="1175" x2="2798.3" y2="1177.5"/><line x1="2798.3" y1="1196.3" x2="2798.3" y2="1198.8"/>
<path d="M2803.8,1181 Q2802.6,1177.6 2798.3,1177.6 Q2793.4,1177.6 2793.4,1181.6 Q2793.4,1185.3 2798.5,1186.4 Q2803.8,1187.6 2803.8,1191.6 Q2803.8,1196 2798.3,1196 Q2794,1196 2793,1193"/></g>
<g fill="none" stroke="#2FB884" stroke-width="3.7" stroke-linecap="round" stroke-linejoin="round"><line x1="2769.5" y1="1421.5" x2="2786.5" y2="1405.0"/><polyline points="2774.6,1405.0 2786.5,1405.0 2786.5,1416.5"/></g>
<rect x="2761.3" y="1488.5" width="103.7" height="250.5" rx="5" fill="#E9EFFD"/>
<rect x="2761.3" y="1522" width="103.7" height="217" rx="5" fill="url(#bluebar)"/>
<rect x="2904.2" y="1488.5" width="101.3" height="250.5" rx="5" fill="#FFF5E9"/>
<rect x="2904.2" y="1575" width="101.3" height="164" rx="5" fill="url(#orabar)"/>
<circle cx="3119.2" cy="1508" r="9.7" fill="#6C9AF2"/><circle cx="3119.2" cy="1652.3" r="9.7" fill="#F0AE45"/>
<g fill="none" stroke-linecap="round" stroke-linejoin="round" stroke-width="5.4">
<polyline points="885.4,2028.7 888.6,2032 894.6,2026" stroke="#74D8B0"/>
<polyline points="885.4,2042.9 888.6,2046.2 894.6,2040.2" stroke="#3AC68F"/>
<polyline points="885.4,2057.1 888.6,2060.4 894.6,2054.4" stroke="#74D8B0"/>
<line x1="902" y1="2028.9" x2="923.6" y2="2028.9" stroke="#74D8B0"/>
<line x1="902" y1="2043" x2="923.6" y2="2043" stroke="#3AC68F"/>
<line x1="902" y1="2057.2" x2="923.6" y2="2057.2" stroke="#74D8B0"/>
</g>
<circle cx="2660" cy="2039.5" r="12.5" fill="none" stroke="#111318" stroke-width="3.6"/>
<line x1="2669" y1="2048.5" x2="2679" y2="2058.5" stroke="#111318" stroke-width="3.6" stroke-linecap="round"/>
<path d="M3147,2032 L3176,2032 L3165,2046 L3165,2057 L3158,2053 L3158,2046 Z" fill="none" stroke="#111318" stroke-width="3.6" stroke-linejoin="round"/>
<g fill="none" stroke="#B3B8C2" stroke-width="2.8" stroke-linecap="round" stroke-linejoin="round"><polyline points="1597.4,2171.5 1602.4,2166.5 1607.4,2171.5"/><polyline points="1597.4,2181.5 1602.4,2186.5 1607.4,2181.5"/></g>
<g fill="none" stroke="#B3B8C2" stroke-width="2.8" stroke-linecap="round" stroke-linejoin="round"><polyline points="1834.0,2171.5 1839.0,2166.5 1844.0,2171.5"/><polyline points="1834.0,2181.5 1839.0,2186.5 1844.0,2181.5"/></g>
<g fill="none" stroke="#B3B8C2" stroke-width="2.8" stroke-linecap="round" stroke-linejoin="round"><polyline points="2053.0,2171.5 2058.0,2166.5 2063.0,2171.5"/><polyline points="2053.0,2181.5 2058.0,2186.5 2063.0,2181.5"/></g>
<g fill="none" stroke="#B3B8C2" stroke-width="2.8" stroke-linecap="round" stroke-linejoin="round"><polyline points="2391.8,2171.5 2396.8,2166.5 2401.8,2171.5"/><polyline points="2391.8,2181.5 2396.8,2186.5 2401.8,2181.5"/></g>
</svg>
<div class="t" style="left:328.83px;top:242.07px;font-size:52.47px;line-height:52.47px;letter-spacing:0.000px;color:#1B2232;transform:scaleX(0.9041);transform-origin:0 0;background:linear-gradient(180deg,#2E3C60,#192132);-webkit-background-clip:text;background-clip:text;-webkit-text-fill-color:transparent;"><span style="font-weight:700">Pluscare</span></div>
<div class="t" style="left:327.07px;top:396.17px;font-size:33.58px;line-height:33.58px;letter-spacing:0.000px;color:#8B93A1;transform:scaleX(0.9403);transform-origin:0 0;">Search here ..</div>
<div class="t" style="left:630.97px;top:397.40px;font-size:32.12px;line-height:32.12px;letter-spacing:0.000px;color:#8B93A1;transform:scaleX(0.9437);transform-origin:0 0;">⌘ K</div>
<div class="t" style="left:236.44px;top:517.01px;font-size:25.15px;line-height:25.15px;letter-spacing:3.952px;color:#7C8594;"><span style="-webkit-text-stroke:0.35px #7C8594">MAIN MENU</span></div>
<div class="t" style="left:237.91px;top:1017.85px;font-size:26.16px;line-height:26.16px;letter-spacing:0.302px;color:#7C8594;"><span style="-webkit-text-stroke:0.37px #7C8594">TEAM MANAGEMENT</span></div>
<div class="t" style="left:344.77px;top:592.73px;font-size:35.76px;line-height:35.76px;letter-spacing:0.000px;color:#0E1116;transform:scaleX(0.9313);transform-origin:0 0;"><span style="font-weight:700">Dashboard</span></div>
<div class="t" style="left:344.05px;top:694.42px;font-size:35.18px;line-height:35.18px;letter-spacing:0.000px;color:#4A5160;transform:scaleX(1.0208);transform-origin:0 0;"><span style="-webkit-text-stroke:0.49px #4A5160">Patients</span></div>
<div class="t" style="left:345.22px;top:795.72px;font-size:35.18px;line-height:35.18px;letter-spacing:0.000px;color:#4A5160;transform:scaleX(0.9952);transform-origin:0 0;"><span style="-webkit-text-stroke:0.49px #4A5160">Compliance</span></div>
<div class="t" style="left:344.07px;top:896.89px;font-size:35.32px;line-height:35.32px;letter-spacing:0.000px;color:#4A5160;transform:scaleX(1.0104);transform-origin:0 0;"><span style="-webkit-text-stroke:0.49px #4A5160">Financial</span></div>
<div class="t" style="left:344.10px;top:1093.85px;font-size:35.61px;line-height:35.61px;letter-spacing:0.000px;color:#4A5160;transform:scaleX(0.9938);transform-origin:0 0;"><span style="-webkit-text-stroke:0.50px #4A5160">Data Integrity</span></div>
<div class="t" style="left:344.08px;top:1195.09px;font-size:35.32px;line-height:35.32px;letter-spacing:0.000px;color:#4A5160;transform:scaleX(1.0063);transform-origin:0 0;"><span style="-webkit-text-stroke:0.49px #4A5160">Report</span></div>
<div class="t" style="left:343.68px;top:1296.35px;font-size:35.61px;line-height:35.61px;letter-spacing:0.000px;color:#4A5160;transform:scaleX(1.0099);transform-origin:0 0;"><span style="-webkit-text-stroke:0.50px #4A5160">Interoperability</span></div>
<div class="t" style="left:345.37px;top:2166.66px;font-size:36.77px;line-height:36.77px;letter-spacing:0.000px;color:#4A5160;transform:scaleX(0.9740);transform-origin:0 0;"><span style="-webkit-text-stroke:0.51px #4A5160">Settings</span></div>
<div class="t" style="left:344.21px;top:2269.35px;font-size:35.61px;line-height:35.61px;letter-spacing:0.000px;color:#4A5160;transform:scaleX(0.9562);transform-origin:0 0;"><span style="-webkit-text-stroke:0.50px #4A5160">Help &amp; Center</span></div>
<div class="t" style="left:344.13px;top:2370.35px;font-size:35.61px;line-height:35.61px;letter-spacing:0.000px;color:#4A5160;transform:scaleX(0.9814);transform-origin:0 0;"><span style="-webkit-text-stroke:0.50px #4A5160">Dark Mode</span></div>
<div class="t" style="left:827.94px;top:233.14px;font-size:50.15px;line-height:50.15px;letter-spacing:0.000px;color:#0F1217;transform:scaleX(0.9410);transform-origin:0 0;"><span style="font-weight:700">Dashboard</span></div>
<div class="t" style="left:2943.14px;top:245.96px;font-size:25.44px;line-height:25.44px;letter-spacing:0.000px;color:#5F6B7F;transform:scaleX(0.9918);transform-origin:0 0;"><span style="font-weight:700">+10</span></div>
<div class="t" style="left:901.43px;top:404.27px;font-size:65.12px;line-height:65.12px;letter-spacing:0.000px;color:#2A2D33;transform:scaleX(0.9428);transform-origin:0 0;background:linear-gradient(180deg,#1E1F23,#45474D);-webkit-background-clip:text;background-clip:text;-webkit-text-fill-color:transparent;"><span style="-webkit-text-stroke:1.82px transparent">Welcome Back, Ali Husni !</span></div>
<div class="t" style="left:827.88px;top:510.95px;font-size:39.39px;line-height:39.39px;letter-spacing:0.000px;color:#111;transform:scaleX(0.9648);transform-origin:0 0;"><span style="color:#7F8898">Let’s Rock today. We have </span><span style="-webkit-text-stroke:0.55px #4A5160;color:#4A5160">2 Pending Tasks</span><span style="color:#7F8898"> and </span><span style="-webkit-text-stroke:0.55px #4A5160;color:#4A5160">5 New Records.</span></div>
<div class="t" style="left:3172.49px;top:449.96px;font-size:33.00px;line-height:33.00px;letter-spacing:0.000px;color:#111318;"><span style="-webkit-text-stroke:0.46px #111318">Export</span></div>
<div class="t" style="left:972.29px;top:674.23px;font-size:40.12px;line-height:40.12px;letter-spacing:0.000px;color:#4A5160;transform:scaleX(1.0066);transform-origin:0 0;"><span style="-webkit-text-stroke:1.12px #4A5160">Patient Record</span></div>
<div class="t" style="left:876.24px;top:799.70px;font-size:80.67px;line-height:80.67px;letter-spacing:0.000px;color:#1B1E24;transform:scaleX(1.0614);transform-origin:0 0;background:linear-gradient(180deg,#0B0D12,#50545C);-webkit-background-clip:text;background-clip:text;-webkit-text-fill-color:transparent;"><span style="-webkit-text-stroke:2.26px transparent">365</span></div>
<div class="t" style="left:1079.40px;top:837.12px;font-size:27.62px;line-height:27.62px;letter-spacing:0.000px;color:#2FB884;"><span style="-webkit-text-stroke:0.77px #2FB884">142</span></div>
<div class="t" style="left:1134.73px;top:837.12px;font-size:27.62px;line-height:27.62px;letter-spacing:0.000px;color:#7E8696;transform:scaleX(1.0860);transform-origin:0 0;">Increased vs last month</div>
<div class="t" style="left:908.75px;top:988.93px;font-size:28.78px;line-height:28.78px;letter-spacing:0.000px;color:#7E8696;transform:scaleX(1.0249);transform-origin:0 0;">120 Inpatients</div>
<div class="t" style="left:1168.95px;top:988.93px;font-size:28.78px;line-height:28.78px;letter-spacing:0.000px;color:#7E8696;transform:scaleX(1.0737);transform-origin:0 0;">200 Outpatients</div>
<div class="t" style="left:1461.94px;top:988.93px;font-size:28.78px;line-height:28.78px;letter-spacing:0.000px;color:#7E8696;transform:scaleX(1.0062);transform-origin:0 0;">45 Emergency</div>
<div class="t" style="left:1916.76px;top:675.10px;font-size:39.10px;line-height:39.10px;letter-spacing:0.000px;color:#4A5160;transform:scaleX(1.0338);transform-origin:0 0;"><span style="-webkit-text-stroke:1.09px #4A5160">Surgeries Performed</span></div>
<div class="t" style="left:1845.00px;top:795.93px;font-size:28.78px;line-height:28.78px;letter-spacing:0.000px;color:#7E8696;transform:scaleX(1.0604);transform-origin:0 0;">Elective</div>
<div class="t" style="left:2334.22px;top:795.93px;font-size:28.78px;line-height:28.78px;letter-spacing:0.000px;color:#7E8696;transform:scaleX(1.0095);transform-origin:0 0;">Emergency</div>
<div class="t" style="left:1845.36px;top:846.39px;font-size:35.32px;line-height:35.32px;letter-spacing:0.000px;color:#1B1E24;transform:scaleX(1.1841);transform-origin:0 0;background:linear-gradient(180deg,#0B0D12,#50545C);-webkit-background-clip:text;background-clip:text;-webkit-text-fill-color:transparent;"><span style="-webkit-text-stroke:0.99px transparent">720</span></div>
<div class="t" style="left:2335.61px;top:846.39px;font-size:35.32px;line-height:35.32px;letter-spacing:0.000px;color:#1B1E24;transform:scaleX(1.2249);transform-origin:0 0;background:linear-gradient(180deg,#0B0D12,#50545C);-webkit-background-clip:text;background-clip:text;-webkit-text-fill-color:transparent;"><span style="-webkit-text-stroke:0.99px transparent">480</span></div>
<div class="t" style="left:1965.40px;top:853.30px;font-size:26.45px;line-height:26.45px;letter-spacing:0.000px;color:#2FB884;transform:scaleX(0.9913);transform-origin:0 0;"><span style="-webkit-text-stroke:0.74px #2FB884">316</span></div>
<div class="t" style="left:2453.87px;top:853.30px;font-size:26.45px;line-height:26.45px;letter-spacing:0.000px;color:#D7193D;transform:scaleX(1.0587);transform-origin:0 0;"><span style="-webkit-text-stroke:0.74px #D7193D">120</span></div>
<div class="t" style="left:1847.40px;top:932.00px;font-size:28.34px;line-height:28.34px;letter-spacing:0.000px;color:#7E8696;transform:scaleX(1.0319);transform-origin:0 0;">vs last month</div>
<div class="t" style="left:2336.50px;top:932.00px;font-size:28.34px;line-height:28.34px;letter-spacing:0.000px;color:#7E8696;transform:scaleX(1.0319);transform-origin:0 0;">vs last month</div>
<div class="t" style="left:2859.37px;top:675.88px;font-size:37.94px;line-height:37.94px;letter-spacing:0.000px;color:#4A5160;transform:scaleX(1.0558);transform-origin:0 0;"><span style="-webkit-text-stroke:1.06px #4A5160">Compliance Rate</span></div>
<div class="t" style="left:2761.94px;top:789.93px;font-size:79.22px;line-height:79.22px;letter-spacing:0.000px;color:#1B1E24;transform:scaleX(1.0932);transform-origin:0 0;background:linear-gradient(180deg,#0B0D12,#50545C);-webkit-background-clip:text;background-clip:text;-webkit-text-fill-color:transparent;"><span style="-webkit-text-stroke:2.22px transparent">98</span></div>
<div class="t" style="left:2858.24px;top:814.66px;font-size:49.42px;line-height:49.42px;letter-spacing:0.000px;color:#1B1E24;background:linear-gradient(180deg,#23252B,#50545C);-webkit-background-clip:text;background-clip:text;-webkit-text-fill-color:transparent;"><span style="-webkit-text-stroke:1.38px transparent">%</span></div>
<div class="t" style="left:2951.52px;top:824.80px;font-size:30.23px;line-height:30.23px;letter-spacing:0.000px;color:#2FB884;transform:scaleX(0.9772);transform-origin:0 0;"><span style="-webkit-text-stroke:0.85px #2FB884">8.3%</span></div>
<div class="t" style="left:3024.62px;top:826.81px;font-size:27.04px;line-height:27.04px;letter-spacing:0.000px;color:#7E8696;transform:scaleX(1.0941);transform-origin:0 0;">increased vs last month</div>
<div class="t" style="left:2790.30px;top:928.78px;font-size:28.49px;line-height:28.49px;letter-spacing:0.000px;color:#7E8696;transform:scaleX(1.0661);transform-origin:0 0;">4 departments meeting the target, 2</div>
<div class="t" style="left:2789.71px;top:968.00px;font-size:28.34px;line-height:28.34px;letter-spacing:0.000px;color:#7E8696;transform:scaleX(1.0864);transform-origin:0 0;">departments critically below 90%</div>
<div class="t" style="left:971.85px;top:1158.17px;font-size:39.24px;line-height:39.24px;letter-spacing:0.000px;color:#4A5160;transform:scaleX(1.0703);transform-origin:0 0;"><span style="-webkit-text-stroke:1.10px #4A5160">Patient Arrival Statistics</span></div>
<div class="t" style="left:2272.95px;top:1160.15px;font-size:35.61px;line-height:35.61px;letter-spacing:0.000px;color:#111318;transform:scaleX(0.9841);transform-origin:0 0;"><span style="-webkit-text-stroke:0.50px #111318">Jan 2024 - Oct 2024</span></div>
<div class="t" style="left:878.08px;top:1330.03px;font-size:30.67px;line-height:30.67px;letter-spacing:0.000px;color:#7E8696;transform:scaleX(1.0771);transform-origin:0 0;">500</div>
<div class="t" style="left:878.65px;top:1422.53px;font-size:30.67px;line-height:30.67px;letter-spacing:0.000px;color:#7E8696;transform:scaleX(1.0656);transform-origin:0 0;">400</div>
<div class="t" style="left:878.14px;top:1515.40px;font-size:30.23px;line-height:30.23px;letter-spacing:0.000px;color:#7E8696;transform:scaleX(1.0912);transform-origin:0 0;">300</div>
<div class="t" style="left:877.73px;top:1607.83px;font-size:30.67px;line-height:30.67px;letter-spacing:0.000px;color:#7E8696;transform:scaleX(1.0840);transform-origin:0 0;">200</div>
<div class="t" style="left:877.19px;top:1700.93px;font-size:30.09px;line-height:30.09px;letter-spacing:0.000px;color:#7E8696;transform:scaleX(0.9629);transform-origin:0 0;">100</div>
<div class="t" style="left:878.25px;top:1793.52px;font-size:29.51px;line-height:29.51px;letter-spacing:0.000px;color:#7E8696;">0</div>
<div class="t" style="left:1024.52px;top:1846.29px;font-size:29.65px;line-height:29.65px;letter-spacing:0.000px;color:#7E8696;transform:scaleX(1.0370);transform-origin:0 0;">Jan</div>
<div class="t" style="left:1214.38px;top:1846.29px;font-size:29.65px;line-height:29.65px;letter-spacing:0.000px;color:#7E8696;transform:scaleX(0.9954);transform-origin:0 0;">Feb</div>
<div class="t" style="left:1406.11px;top:1846.29px;font-size:29.65px;line-height:29.65px;letter-spacing:0.000px;color:#7E8696;transform:scaleX(1.0241);transform-origin:0 0;">Mar</div>
<div class="t" style="left:1601.04px;top:1846.29px;font-size:29.65px;line-height:29.65px;letter-spacing:0.000px;color:#7E8696;">Apr</div>
<div class="t" style="left:1788.23px;top:1846.29px;font-size:29.65px;line-height:29.65px;letter-spacing:0.000px;color:#4A5160;transform:scaleX(1.0556);transform-origin:0 0;"><span style="-webkit-text-stroke:0.83px #4A5160">May</span></div>
<div class="t" style="left:1989.01px;top:1846.29px;font-size:29.65px;line-height:29.65px;letter-spacing:0.000px;color:#7E8696;transform:scaleX(1.0568);transform-origin:0 0;">Jun</div>
<div class="t" style="left:2179.64px;top:1846.29px;font-size:29.65px;line-height:29.65px;letter-spacing:0.000px;color:#7E8696;transform:scaleX(1.0219);transform-origin:0 0;">Aug</div>
<div class="t" style="left:2372.46px;top:1846.29px;font-size:29.65px;line-height:29.65px;letter-spacing:0.000px;color:#7E8696;transform:scaleX(0.9947);transform-origin:0 0;">Sep</div>
<div class="t" style="left:2565.52px;top:1846.29px;font-size:29.65px;line-height:29.65px;letter-spacing:0.000px;color:#7E8696;transform:scaleX(1.0560);transform-origin:0 0;">Oct</div>
<div class="t" style="left:1873.57px;top:1409.63px;font-size:26.31px;line-height:26.31px;letter-spacing:0.000px;color:#4A5160;transform:scaleX(1.1258);transform-origin:0 0;"><span style="-webkit-text-stroke:0.37px #4A5160">May, 2024</span></div>
<div class="t" style="left:1917.55px;top:1462.69px;font-size:27.76px;line-height:27.76px;letter-spacing:0.000px;color:#7E8696;transform:scaleX(1.0746);transform-origin:0 0;">Patient in</div>
<div class="t" style="left:1917.52px;top:1516.79px;font-size:27.76px;line-height:27.76px;letter-spacing:0.000px;color:#7E8696;transform:scaleX(1.0879);transform-origin:0 0;">Patient out</div>
<div class="t" style="left:2117.59px;top:1462.69px;font-size:27.76px;line-height:27.76px;letter-spacing:0.000px;color:#111318;transform:scaleX(1.1431);transform-origin:0 0;"><span style="-webkit-text-stroke:0.78px #111318">350</span></div>
<div class="t" style="left:2131.42px;top:1515.77px;font-size:29.80px;line-height:29.80px;letter-spacing:0.000px;color:#111318;transform:scaleX(0.7848);transform-origin:0 0;"><span style="-webkit-text-stroke:0.83px #111318">211</span></div>
<div class="t" style="left:2856.60px;top:1170.16px;font-size:36.19px;line-height:36.19px;letter-spacing:0.000px;color:#4A5160;transform:scaleX(1.1102);transform-origin:0 0;"><span style="-webkit-text-stroke:1.01px #4A5160">Financial Flow</span></div>
<div class="t" style="left:2766.40px;top:1290.39px;font-size:80.09px;line-height:80.09px;letter-spacing:0.000px;color:#1B1E24;transform:scaleX(1.0458);transform-origin:0 0;background:linear-gradient(180deg,#0B0D12,#50545C);-webkit-background-clip:text;background-clip:text;-webkit-text-fill-color:transparent;"><span style="-webkit-text-stroke:2.24px transparent">$58.980</span></div>
<div class="t" style="left:2800.69px;top:1400.64px;font-size:25.58px;line-height:25.58px;letter-spacing:0.000px;color:#2FB884;transform:scaleX(1.1200);transform-origin:0 0;"><span style="-webkit-text-stroke:0.72px #2FB884">$14.203</span></div>
<div class="t" style="left:2911.52px;top:1400.64px;font-size:25.58px;line-height:25.58px;letter-spacing:0.000px;color:#7E8696;transform:scaleX(1.1584);transform-origin:0 0;">increased vs last month</div>
<div class="t" style="left:3151.34px;top:1496.29px;font-size:30.96px;line-height:30.96px;letter-spacing:0.000px;color:#7E8696;">Approved Claims</div>
<div class="t" style="left:3151.00px;top:1551.55px;font-size:37.50px;line-height:37.50px;letter-spacing:0.000px;color:#1B1E24;background:linear-gradient(180deg,#0B0D12,#50545C);-webkit-background-clip:text;background-clip:text;-webkit-text-fill-color:transparent;"><span style="-webkit-text-stroke:1.05px transparent">$45.200</span></div>
<div class="t" style="left:3148.92px;top:1639.70px;font-size:30.23px;line-height:30.23px;letter-spacing:0.000px;color:#7E8696;">Pending Claims</div>
<div class="t" style="left:3150.98px;top:1695.12px;font-size:38.95px;line-height:38.95px;letter-spacing:0.000px;color:#1B1E24;background:linear-gradient(180deg,#0B0D12,#50545C);-webkit-background-clip:text;background-clip:text;-webkit-text-fill-color:transparent;"><span style="-webkit-text-stroke:1.09px transparent">$17.800</span></div>
<div class="t" style="left:2792.36px;top:1826.66px;font-size:27.33px;line-height:27.33px;letter-spacing:0.000px;color:#7E8696;transform:scaleX(1.0420);transform-origin:0 0;">The remaining 15% of claims were denied</div>
<div class="t" style="left:963.60px;top:2024.84px;font-size:38.81px;line-height:38.81px;letter-spacing:0.000px;color:#4A5160;transform:scaleX(1.0683);transform-origin:0 0;"><span style="-webkit-text-stroke:1.09px #4A5160">Patient List</span></div>
<div class="t" style="left:2705.51px;top:2026.39px;font-size:35.32px;line-height:35.32px;letter-spacing:0.000px;color:#8B93A1;transform:scaleX(0.9310);transform-origin:0 0;">Search Patient ..</div>
<div class="t" style="left:967.36px;top:2160.09px;font-size:32.85px;line-height:32.85px;letter-spacing:0.000px;color:#7E8696;transform:scaleX(1.0544);transform-origin:0 0;">Patient ID</div>
<div class="t" style="left:1200.15px;top:2160.09px;font-size:32.85px;line-height:32.85px;letter-spacing:0.000px;color:#7E8696;transform:scaleX(1.0576);transform-origin:0 0;">Patients name</div>
<div class="t" style="left:1719.64px;top:2160.09px;font-size:32.85px;line-height:32.85px;letter-spacing:0.000px;color:#7E8696;transform:scaleX(0.9837);transform-origin:0 0;">Age</div>
<div class="t" style="left:1911.11px;top:2160.09px;font-size:32.85px;line-height:32.85px;letter-spacing:0.000px;color:#7E8696;transform:scaleX(1.0245);transform-origin:0 0;">Gender</div>
<div class="t" style="left:2132.93px;top:2160.09px;font-size:32.85px;line-height:32.85px;letter-spacing:0.000px;color:#7E8696;transform:scaleX(1.0415);transform-origin:0 0;">Admission Date</div>
<div class="t" style="left:2468.66px;top:2160.09px;font-size:32.85px;line-height:32.85px;letter-spacing:0.000px;color:#7E8696;transform:scaleX(1.0914);transform-origin:0 0;">Department</div>
<div class="t" style="left:2833.96px;top:2160.09px;font-size:32.85px;line-height:32.85px;letter-spacing:0.000px;color:#7E8696;transform:scaleX(1.0528);transform-origin:0 0;">Primary Diagnosis</div>
<div class="t" style="left:968.85px;top:2287.96px;font-size:32.99px;line-height:32.99px;letter-spacing:0.000px;color:#0F1115;transform:scaleX(1.0506);transform-origin:0 0;"><span style="-webkit-text-stroke:0.46px #0F1115">001234</span></div>
<div class="t" style="left:1215.98px;top:2295.32px;font-size:20.06px;line-height:20.06px;letter-spacing:0.000px;color:#5E6675;transform:scaleX(1.0751);transform-origin:0 0;"><span style="-webkit-text-stroke:0.56px #5E6675">OP</span></div>
<div class="t" style="left:1295.16px;top:2287.96px;font-size:32.99px;line-height:32.99px;letter-spacing:0.000px;color:#0F1115;transform:scaleX(1.0401);transform-origin:0 0;"><span style="-webkit-text-stroke:0.46px #0F1115">John Smith</span></div>
<div class="t" style="left:1718.90px;top:2287.96px;font-size:32.99px;line-height:32.99px;letter-spacing:0.000px;color:#0F1115;transform:scaleX(1.0504);transform-origin:0 0;"><span style="-webkit-text-stroke:0.46px #0F1115">45</span></div>
<div class="t" style="left:1909.83px;top:2287.96px;font-size:32.99px;line-height:32.99px;letter-spacing:0.000px;color:#0F1115;transform:scaleX(1.0974);transform-origin:0 0;"><span style="-webkit-text-stroke:0.46px #0F1115">Male</span></div>
<div class="t" style="left:2131.10px;top:2287.96px;font-size:32.99px;line-height:32.99px;letter-spacing:0.000px;color:#0F1115;transform:scaleX(1.1446);transform-origin:0 0;"><span style="-webkit-text-stroke:0.46px #0F1115">2024-08-20</span></div>
<div class="t" style="left:2469.84px;top:2287.96px;font-size:32.99px;line-height:32.99px;letter-spacing:0.000px;color:#0F1115;transform:scaleX(1.0501);transform-origin:0 0;"><span style="-webkit-text-stroke:0.46px #0F1115">Cardiology</span></div>
<div class="t" style="left:2835.03px;top:2287.96px;font-size:32.99px;line-height:32.99px;letter-spacing:0.000px;color:#0F1115;transform:scaleX(1.0556);transform-origin:0 0;"><span style="-webkit-text-stroke:0.46px #0F1115">Coronary Artery Disease</span></div>
<script>(function(){try{var w=window.innerWidth;if(w&&Math.abs(w-3200)>4){document.documentElement.style.zoom=(w/3200);}}catch(e){}})();</script>
</body></html>
